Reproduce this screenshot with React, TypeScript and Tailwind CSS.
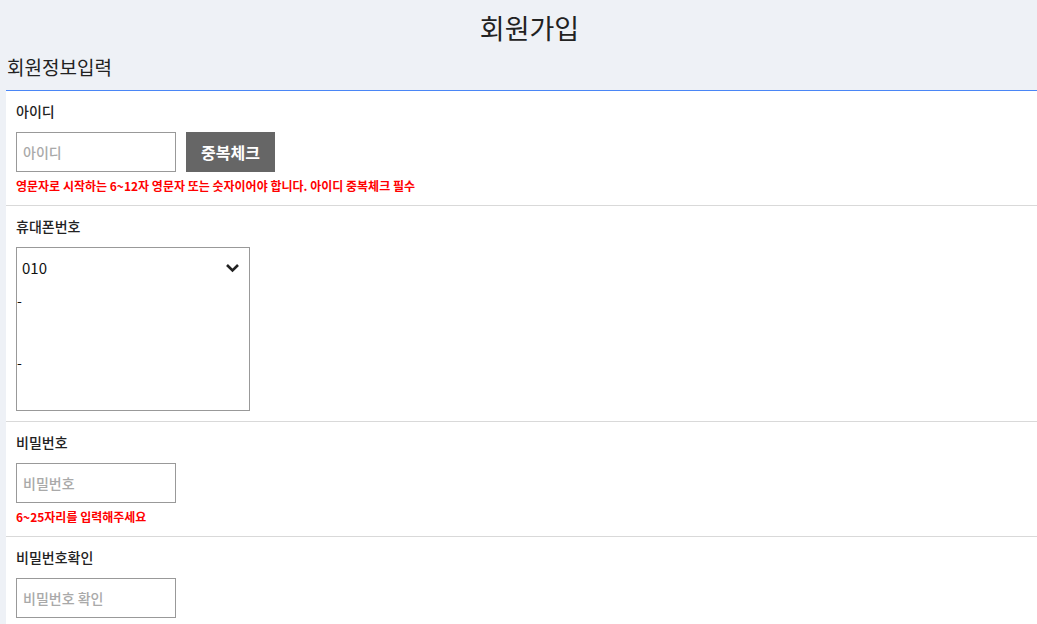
import React from "react";

const font = { fontFamily: '"Noto Sans CJK KR", "Noto Sans", sans-serif' };

function Section({ children, last }: { children: React.ReactNode; last?: boolean }) {
  return (
    <div className={`px-[10px] pt-[10px] ${last ? "" : "border-b border-[#d9d9d9]"}`}>{children}</div>
  );
}

function Label({ children }: { children: React.ReactNode }) {
  return <div className="h-[21px] text-[14px] leading-[21px] font-medium text-[#222]">{children}</div>;
}

function Input({ placeholder }: { placeholder: string }) {
  return (
    <div className="w-[160px] h-[40px] border border-[#999] flex items-center px-[6px] text-[14px] font-medium text-[#a9a9a9] bg-white">
      {placeholder}
    </div>
  );
}

function Err({ children }: { children: React.ReactNode }) {
  return <div className="mt-[6px] h-[16px] text-[12px] leading-[16px] font-bold text-[#ff0000]">{children}</div>;
}

export default function App() {
  return (
    <div className="w-[1037px] h-[624px] overflow-hidden bg-[#eef1f6]" style={font}>
      <div className="h-[56px] flex items-center justify-center pl-[22px] text-[27px] text-[#222]">회원가입</div>
      <div className="h-[34px] pl-[7px] text-[19px] leading-[22px] text-[#222]">회원정보입력</div>
      <div className="ml-[6px] bg-white border-t border-[#4a86f6]">
        <Section>
          <Label>아이디</Label>
          <div className="mt-[10px] flex gap-[10px]">
            <Input placeholder="아이디" />
            <div className="w-[89px] h-[40px] bg-[#666] text-white text-[16px] font-bold flex items-center justify-center">
              중복체크
            </div>
          </div>
          <Err>영문자로 시작하는 6~12자 영문자 또는 숫자이어야 합니다. 아이디 중복체크 필수</Err>
          <div className="h-[11px]" />
        </Section>
        <Section>
          <Label>휴대폰번호</Label>
          <div className="mt-[10px] w-[234px] h-[164px] border border-[#999] text-[14px] text-[#111]">
            <div className="h-[40px] flex items-center justify-between pl-[5px] pr-[9px]">
              <span className="text-[15px]">010</span>
              <svg width="15" height="10" viewBox="0 0 15 10">
                <path d="M2 2 L7.5 7.5 L13 2" fill="none" stroke="#222" strokeWidth="2.6" />
              </svg>
            </div>
            <div className="h-[24px] leading-[24px]">-</div>
            <div className="h-[38px]" />
            <div className="h-[24px] leading-[24px]">-</div>
          </div>
          <div className="h-[10px]" />
        </Section>
        <Section>
          <Label>비밀번호</Label>
          <div className="mt-[10px]">
            <Input placeholder="비밀번호" />
          </div>
          <Err>6~25자리를 입력해주세요</Err>
          <div className="h-[11px]" />
        </Section>
        <Section last>
          <Label>비밀번호확인</Label>
          <div className="mt-[10px]">
            <Input placeholder="비밀번호 확인" />
          </div>
          <div className="h-[20px]" />
        </Section>
      </div>
    </div>
  );
}
